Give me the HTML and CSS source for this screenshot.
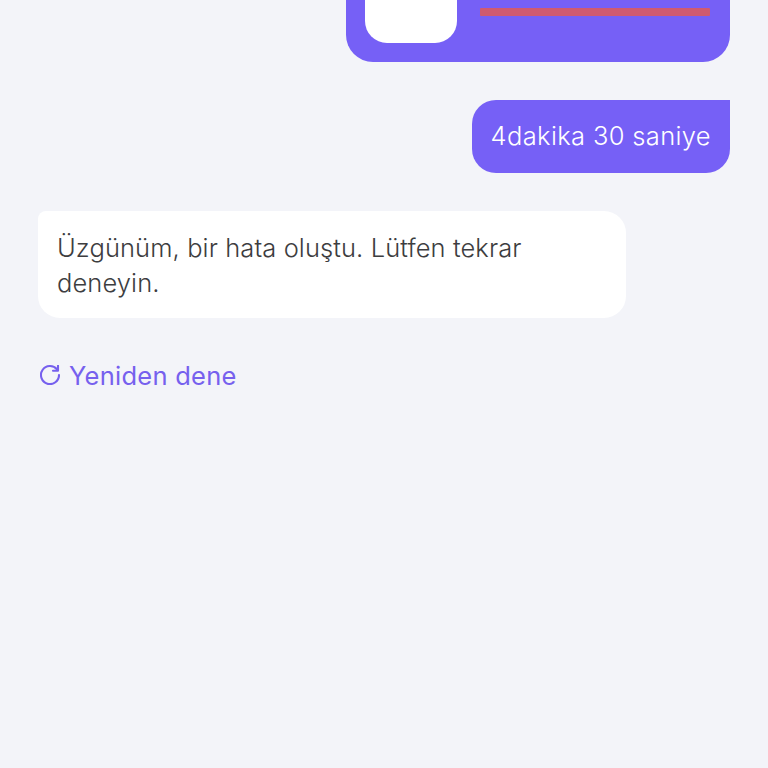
FILE: index.html
```html
<!DOCTYPE html>
<html lang="tr">
<head>
    <meta charset="UTF-8">
    <title>Sohbet</title>
    <link rel="stylesheet" href="styles.css">
</head>
<body>
    <div class="chat">
        <!-- Attachment message, scrolled partly out of view -->
        <div class="bubble-out attachment">
            <div class="thumb"></div>
            <div class="attachment-info">
                <div class="progress"></div>
            </div>
        </div>

        <div class="bubble-out message">4dakika 30 saniye</div>

        <div class="bubble-in">Üzgünüm, bir hata oluştu. Lütfen tekrar deneyin.</div>

        <div class="retry">
            <svg class="retry-icon" viewBox="0 0 20 20" fill="none" stroke="currentColor" stroke-width="2.1" stroke-linecap="round" stroke-linejoin="round">
                <path d="M17 4.4A9 9 0 1 0 19 10"/>
                <path d="M18 .8v5h-5"/>
            </svg>
            <span>Yeniden dene</span>
        </div>
    </div>
</body>
</html>
```

FILE: styles.css
```css
* {
    box-sizing: border-box;
    margin: 0;
    padding: 0;
}

html, body {
    width: 100%;
    height: 100%;
    overflow: hidden;
    background: #f3f4f9;
    font-family: 'Inter', 'Liberation Sans', sans-serif;
}

.chat {
    display: flex;
    flex-direction: column;
    margin-top: -60px;
    padding: 0 38px;
}

.bubble-out {
    align-self: flex-end;
    background: #7660f6;
    color: #fff;
}

.attachment {
    display: flex;
    width: 384px;
    height: 122px;
    gap: 23px;
    padding: 19px;
    border-radius: 27px;
}

.thumb {
    width: 92px;
    height: 84px;
    background: #fff;
    border-radius: 22px;
}

.attachment-info {
    flex: 1;
    padding-top: 49px;
}

.progress {
    width: 230px;
    height: 8px;
    background: #cf5a70;
    border-radius: 1px;
}

.message {
    margin-top: 38px;
    padding: 19px;
    font-size: 25.5px;
    font-weight: 300;
    letter-spacing: 0.35px;
    line-height: 34.5px;
    border-radius: 24px 0 24px 24px;
}

.bubble-in {
    width: 588px;
    margin-top: 38px;
    padding: 19px 19px 18px;
    background: #fff;
    color: #3d3d40;
    font-size: 25.5px;
    font-weight: 300;
    letter-spacing: 0.1px;
    line-height: 35px;
    border-radius: 8px 22px 22px 22px;
}

.retry {
    display: flex;
    align-items: center;
    gap: 9px;
    margin-top: 40px;
    padding-left: 2px;
    color: #7660ee;
    font-size: 25.5px;
    font-weight: 400;
    letter-spacing: 0.25px;
    line-height: 35px;
}

.retry-icon {
    width: 20px;
    height: 20px;
}
```
